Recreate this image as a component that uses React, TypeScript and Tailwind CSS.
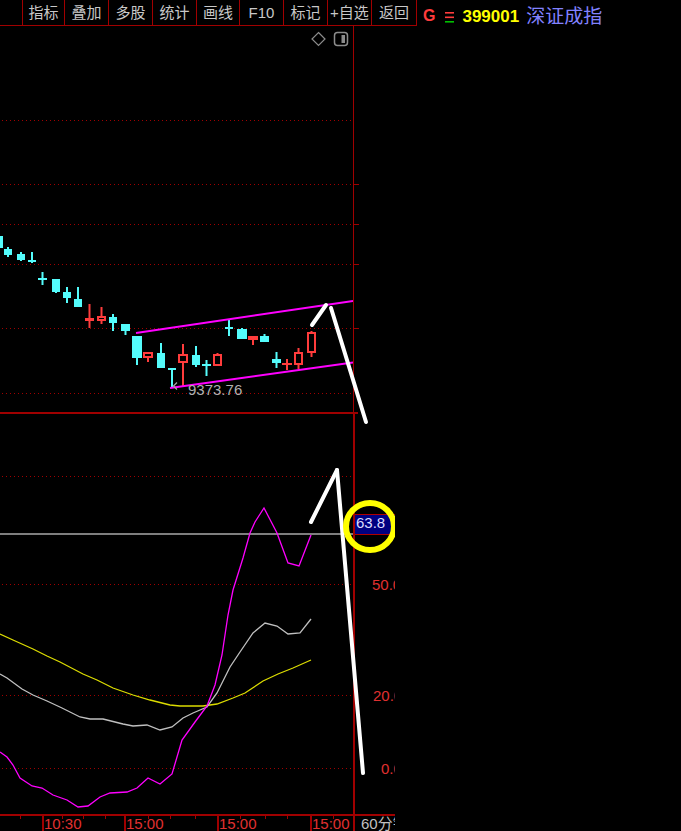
import React from 'react';

const GRID = '#a00000';
const CYAN = '#54fcfc';
const CRED = '#ff3c3c';
const MAG = '#ff00ff';

type C = { x1: number; x2: number; t: number; b: number; h: number; l: number; up: boolean };

const candles: C[] = [
  { x1: -5, x2: 3, t: 236, b: 248, h: 233, l: 250, up: false },
  { x1: 4, x2: 12, t: 249, b: 255, h: 247, l: 257, up: false },
  { x1: 17, x2: 25, t: 254, b: 260, h: 252, l: 261, up: false },
  { x1: 28, x2: 36, t: 260, b: 262, h: 252, l: 263, up: false },
  { x1: 38, x2: 47, t: 278, b: 280, h: 272, l: 285, up: false },
  { x1: 52, x2: 60, t: 279, b: 292, h: 279, l: 293, up: false },
  { x1: 63, x2: 71, t: 292, b: 298, h: 287, l: 303, up: false },
  { x1: 74, x2: 82, t: 299, b: 307, h: 287, l: 307, up: false },
  { x1: 85, x2: 94, t: 318, b: 321, h: 304, l: 328, up: true },
  { x1: 97, x2: 106, t: 316, b: 321, h: 307, l: 324, up: true },
  { x1: 109, x2: 117, t: 317, b: 323, h: 314, l: 331, up: false },
  { x1: 121, x2: 130, t: 324, b: 331, h: 324, l: 335, up: false },
  { x1: 132, x2: 142, t: 336, b: 358, h: 336, l: 365, up: false },
  { x1: 143, x2: 153, t: 352, b: 358, h: 352, l: 362, up: true },
  { x1: 157, x2: 165, t: 353, b: 368, h: 343, l: 368, up: false },
  { x1: 168, x2: 176, t: 368, b: 370, h: 368, l: 387, up: false },
  { x1: 178, x2: 188, t: 354, b: 363, h: 344, l: 386, up: true },
  { x1: 192, x2: 200, t: 355, b: 365, h: 346, l: 367, up: false },
  { x1: 202, x2: 211, t: 364, b: 366, h: 360, l: 376, up: false },
  { x1: 213, x2: 222, t: 354, b: 366, h: 353, l: 366, up: true },
  { x1: 225, x2: 233, t: 327, b: 329, h: 320, l: 336, up: false },
  { x1: 237, x2: 247, t: 329, b: 339, h: 328, l: 339, up: false },
  { x1: 248, x2: 258, t: 336, b: 340, h: 336, l: 345, up: true },
  { x1: 260, x2: 269, t: 336, b: 342, h: 334, l: 342, up: false },
  { x1: 272, x2: 281, t: 359, b: 363, h: 352, l: 368, up: false },
  { x1: 282, x2: 292, t: 363, b: 365, h: 359, l: 370, up: true },
  { x1: 294, x2: 303, t: 352, b: 365, h: 348, l: 369, up: true },
  { x1: 307, x2: 316, t: 332, b: 353, h: 331, l: 357, up: true },
];

const J = [
  [0, 752], [7, 757], [13, 765], [20, 778], [32, 786], [42, 788], [53, 795], [67, 800], [78, 807], [88, 806],
  [100, 797], [110, 793], [127, 792], [137, 788], [148, 778], [160, 784], [172, 774], [182, 740], [195, 722],
  [207, 706], [215, 685], [222, 655], [228, 615], [233, 590], [243, 558], [250, 533], [255, 522], [264, 508],
  [277, 533], [288, 563], [299, 566], [311, 535],
];
const K = [
  [0, 674], [7, 678], [22, 689], [33, 695], [47, 701], [62, 708], [80, 717], [90, 719], [103, 719], [123, 724],
  [133, 726], [147, 725], [160, 730], [172, 727], [183, 718], [193, 713], [207, 707], [217, 693], [230, 667],
  [240, 652], [253, 633], [265, 623], [277, 626], [288, 634], [300, 633], [311, 619],
];
const D = [
  [0, 634], [13, 640], [33, 649], [47, 656], [60, 662], [83, 674], [97, 680], [113, 688], [133, 695], [150, 700],
  [170, 705], [180, 706], [203, 706], [217, 704], [233, 698], [245, 693], [263, 681], [278, 674], [293, 668],
  [311, 660],
];

const pts = (a: number[][]) => a.map((p) => p.join(',')).join(' ');

function Candle({ c }: { c: C }) {
  const cx = (c.x1 + c.x2) / 2;
  const h = c.b - c.t;
  if (!c.up) {
    return (
      <g>
        <line x1={cx} y1={c.h} x2={cx} y2={c.l} stroke={CYAN} strokeWidth={2} />
        <rect x={c.x1} y={c.t} width={c.x2 - c.x1} height={Math.max(h, 2)} fill={CYAN} />
      </g>
    );
  }
  if (h < 5) {
    return (
      <g>
        <line x1={cx} y1={c.h} x2={cx} y2={c.l} stroke={CRED} strokeWidth={2} />
        <rect x={c.x1} y={c.t} width={c.x2 - c.x1} height={Math.max(h, 2)} fill={CRED} />
      </g>
    );
  }
  return (
    <g>
      <line x1={cx} y1={c.h} x2={cx} y2={c.t} stroke={CRED} strokeWidth={2} />
      <line x1={cx} y1={c.b} x2={cx} y2={c.l} stroke={CRED} strokeWidth={2} />
      <rect x={c.x1 + 1} y={c.t + 1} width={c.x2 - c.x1 - 2} height={h - 2} fill="#000" stroke={CRED} strokeWidth={2} />
    </g>
  );
}

const buttons: [string, number][] = [
  ['指标', 42],
  ['叠加', 44],
  ['多股', 44],
  ['统计', 44],
  ['画线', 43],
  ['F10', 44],
  ['标记', 44],
  ['+自选', 44],
  ['返回', 46],
];

const FONT = "font-['Liberation_Sans','Noto_Sans_CJK_SC',sans-serif]";

export default function App() {
  return (
    <div className={`relative w-[681px] h-[831px] overflow-hidden bg-black ${FONT}`}>
      {/* toolbar */}
      <div className="flex h-[26px]">
        <div className="flex h-[26px] w-[417px] border-b border-[#a00000]">
          <div className="w-[22px]" />
          {buttons.map(([t, w], i) => (
            <div
              key={t}
              style={{ width: w }}
              className={`flex h-full items-center justify-center border-l border-[#a00000] text-[15px] leading-none text-[#c8c8c8] ${
                i === buttons.length - 1 ? 'border-r' : ''
              }`}
            >
              {t}
            </div>
          ))}
        </div>
        <div className="flex h-[32px] items-center pl-[6px]">
          <span className="text-[16px] font-bold leading-none text-[#ff3c3c]">G</span>
          <svg width="10" height="14" viewBox="0 0 10 14" className="ml-[10px]">
            <rect x="0" y="3" width="9" height="1.6" fill="#ff3c3c" />
            <rect x="0" y="7.5" width="9" height="1.6" fill="#ff3c3c" />
            <rect x="0" y="12" width="9" height="1.6" fill="#00c000" />
          </svg>
          <span className="ml-[7px] text-[17px] font-bold leading-none text-[#ffff00]">399001</span>
          <span className="ml-[7px] text-[19px] leading-none text-[#8282ff]">深证成指</span>
        </div>
      </div>

      {/* chart block */}
      <div className="w-[395px]">
        {/* upper */}
        <div className="flex h-[386px]">
          <div className="w-[353px]">
            <svg width="353" height="386" viewBox="0 26 353 386" className="block">
              {[120, 184, 224, 264, 328, 393].map((y) => (
                <line key={y} x1={2} y1={y + 0.5} x2={351} y2={y + 0.5} stroke={GRID} strokeWidth={1} strokeDasharray="1 3" />
              ))}
              <polygon points="318.5,32.5 325,39 318.5,45.5 312,39" fill="none" stroke="#8c8c8c" strokeWidth={1.2} />
              <rect x="334.5" y="32.5" width="13" height="13" rx="3" fill="none" stroke="#8c8c8c" strokeWidth={1.5} />
              <rect x="341.5" y="35" width="3.5" height="8" fill="#8c8c8c" />
              {candles.map((c, i) => (
                <Candle key={i} c={c} />
              ))}
              <line x1={136} y1={333} x2={353} y2={301} stroke={MAG} strokeWidth={2} />
              <line x1={170} y1={388} x2={353} y2={362.5} stroke={MAG} strokeWidth={2} />
              <polyline points="177,382.5 173.5,386 177,389.5" fill="none" stroke="#a8a8a8" strokeWidth={1.2} />
              <text x={188} y={395} fill="#b0b0b0" fontSize={15} fontFamily="Liberation Sans, sans-serif">
                9373.76
              </text>
            </svg>
          </div>
          <div className="relative w-[42px] border-l border-[#a00000]">
            {[158, 198, 238, 302].map((t) => (
              <div key={t} style={{ top: t }} className="absolute left-0 h-[1px] w-[5px] bg-[#a00000]" />
            ))}
          </div>
        </div>
        <div className="h-[2px] w-[358px] bg-[#a00000]" />

        {/* lower */}
        <div className="flex h-[400px]">
          <div className="w-[353px]">
            <svg width="353" height="400" viewBox="0 414 353 400" className="block">
              {[476, 584, 695, 768].map((y) => (
                <line key={y} x1={2} y1={y + 0.5} x2={351} y2={y + 0.5} stroke={GRID} strokeWidth={1} strokeDasharray="1 3" />
              ))}
              <line x1={0} y1={534} x2={353} y2={534} stroke="#a8a8a8" strokeWidth={1.6} />
              <polyline points={pts(D)} fill="none" stroke="#dcdc00" strokeWidth={1.3} />
              <polyline points={pts(K)} fill="none" stroke="#c0c0c0" strokeWidth={1.3} />
              <polyline points={pts(J)} fill="none" stroke={MAG} strokeWidth={1.3} />
            </svg>
          </div>
          <div className="relative w-[42px] overflow-hidden border-l-2 border-[#a00000]">
            <div className="absolute left-0 top-[100px] h-[21px] w-full border-y border-[#b00000] bg-[#000080] pl-[1px] text-[15px] leading-[15px] text-[#dcdcff]">
              63.8
            </div>
            <div className="absolute left-[17px] top-[163px] whitespace-nowrap text-[15px] leading-[15px] text-[#e03030]">50.00</div>
            <div className="absolute left-[18px] top-[274px] whitespace-nowrap text-[15px] leading-[15px] text-[#e03030]">20.00</div>
            <div className="absolute left-[26px] top-[347px] whitespace-nowrap text-[15px] leading-[15px] text-[#e03030]">0.00</div>
          </div>
        </div>
        <div className="h-[2px] w-[395px] bg-[#a00000]" />

        {/* time axis */}
        <div className="flex h-[15px]">
          <div className="relative flex w-[353px]">
            <svg width="353" height="15" className="absolute left-0 top-0">
              {[20, 62, 83, 105, 148, 170, 195, 240, 265, 287, 333].map((x) => (
                <line key={x} x1={x + 0.5} y1={0} x2={x + 0.5} y2={3} stroke={GRID} strokeWidth={1} />
              ))}
            </svg>
            <div className="w-[42px]" />
            {[
              ['10:30', 82],
              ['15:00', 93],
              ['15:00', 93],
              ['15:00', 43],
            ].map(([t, w], i) => (
              <div
                key={i}
                style={{ width: Number(w) }}
                className="border-l-2 border-[#a00000] text-[15px] leading-[15px] text-[#e03030] whitespace-nowrap overflow-hidden"
              >
                {t}
              </div>
            ))}
          </div>
          <div className="w-[42px] overflow-hidden whitespace-nowrap border-l-2 border-[#a00000] pl-[6px] text-[15px] leading-[15px] text-[#c0c0c0]">
            60分钟
          </div>
        </div>
      </div>

      {/* hand-drawn overlay */}
      <svg width="395" height="831" viewBox="0 0 395 831" className="pointer-events-none absolute left-0 top-0">
        <g stroke="#ffffff" strokeWidth={4} strokeLinecap="round" fill="none">
          <line x1={312} y1={325} x2={326} y2={305} />
          <line x1={331} y1={308} x2={366} y2={422} />
          <line x1={311} y1={522} x2={337} y2={470} />
          <line x1={337} y1={470} x2={363} y2={773} />
        </g>
        <ellipse cx={370} cy={526.5} rx={24} ry={23.5} fill="none" stroke="#ffff00" strokeWidth={6} />
      </svg>
    </div>
  );
}
